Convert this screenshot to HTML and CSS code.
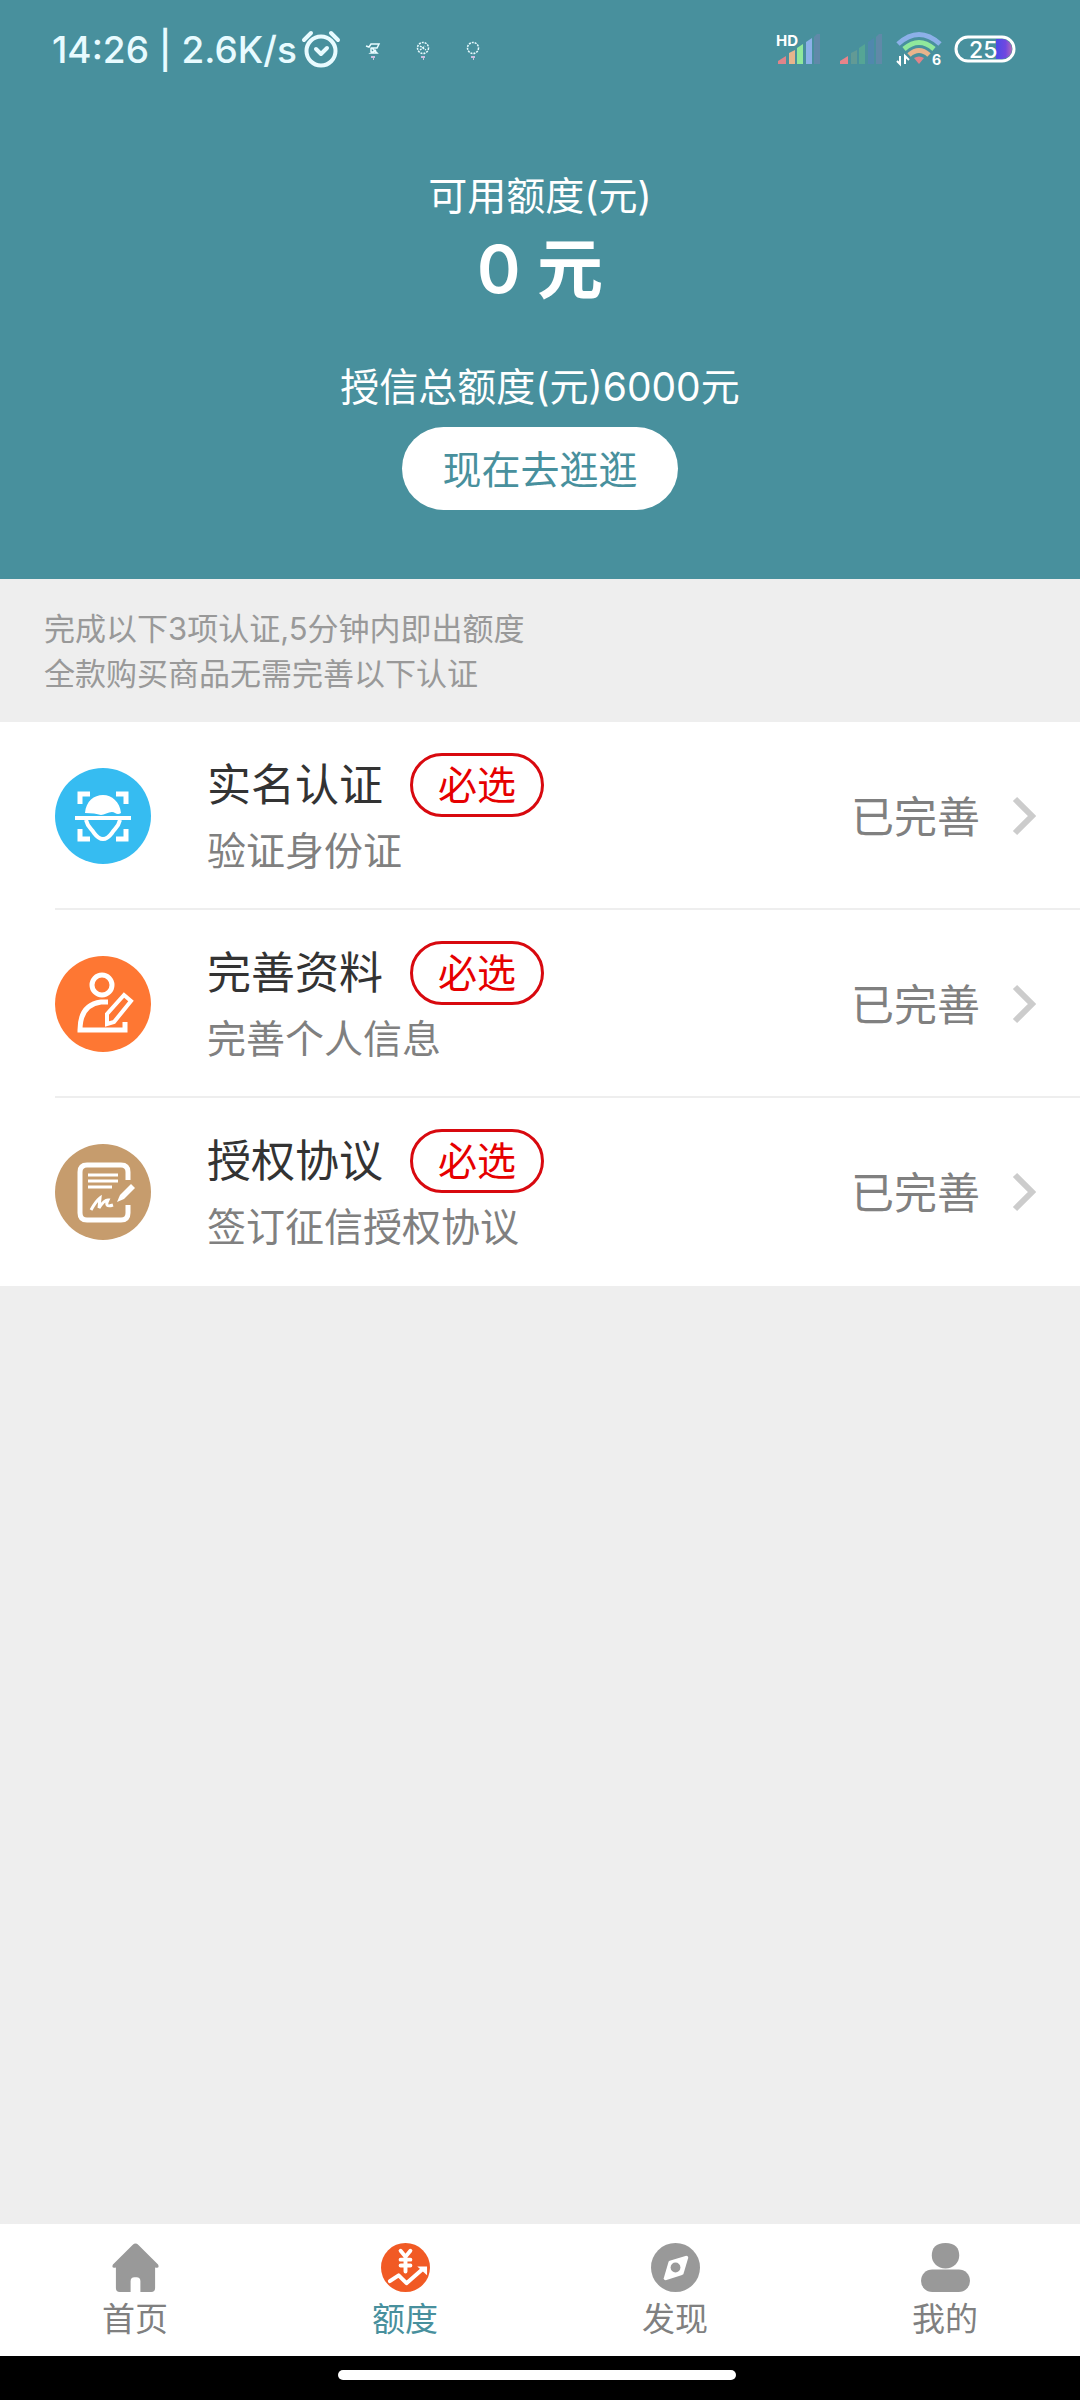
FILE: index.html
```html
<!DOCTYPE html>
<html lang="zh-CN">
<head>
<meta charset="utf-8">
<meta name="viewport" content="width=device-width, initial-scale=1">
<title>额度</title>
<link rel="stylesheet" href="styles.css">
</head>
<body>
<div class="app">
  <header class="hero">
    <div class="status">
      <div class="status-left">
        <span class="clock">14:26 | 2.6K/s</span>
        <svg class="alarm" viewBox="0 0 40 40" aria-hidden="true"><g fill="none" stroke="currentColor" stroke-width="4" stroke-linecap="round"><circle cx="20" cy="22" r="14.500"/><path d="M3 11l7-7M37 11l-7-7"/><path d="M15 20l5 5 6-6" stroke-linejoin="round"/></g></svg>
        <span class="notes">
          <svg viewBox="0 0 16 20" aria-hidden="true"><g fill="none" stroke="currentColor" stroke-width="1.500"><path d="M1 5l3 1 2-3h8l-2 4h-5l5 5H6l5-3M6 7v4"/></g><path d="M6 15h4v2H9v2H8v-2H6z" fill="#cdbfe0"/></svg>
          <svg viewBox="0 0 16 20" aria-hidden="true"><g fill="none" stroke="currentColor" stroke-width="1.500" stroke-dasharray="2 1"><circle cx="8" cy="7" r="5.500"/><path d="M5 5l6 4M5 9l5-4"/></g><path d="M6 15h4v2H9v2H8v-2H6z" fill="#cdbfe0"/></svg>
          <svg viewBox="0 0 16 20" aria-hidden="true"><g fill="none" stroke="currentColor" stroke-width="1.500" stroke-dasharray="2 1"><circle cx="8" cy="7" r="5.500"/></g><path d="M6 15h4v2H9v2H8v-2H6z" fill="#cdbfe0"/></svg>
        </span>
      </div>
      <div class="status-right">
        <svg class="signal" viewBox="0 0 46 34" aria-hidden="true"><path d="M2 32v-3l8-5v8z" fill="#e0848a"/><path d="M13 32V21l6-3v14z" fill="#e8b48c"/><path d="M21 32V16l6-4v20z" fill="#90e89c"/><path d="M30 32V10l6-4v26z" fill="#8cb0e8"/><path d="M38 32V5l3-3h3v30z" fill="#6089a8"/><text x="0" y="14" font-size="15" font-weight="700" fill="#fff">HD</text></svg>
        <svg class="signal" viewBox="0 0 46 34" aria-hidden="true"><path d="M2 32v-3l8-5v8z" fill="#e8848a"/><path d="M13 32V21l6-3v14z" fill="#629a95"/><path d="M21 32V16l6-4v20z" fill="#55a595"/><path d="M30 32V10l6-4v26z" fill="#5088ad"/><path d="M38 32V5l3-3h3v30z" fill="#6089a8"/></svg>
        <svg class="wifi" viewBox="0 0 46 36" aria-hidden="true"><g fill="none" stroke-width="5"><path d="M2 13Q23-6 44 13" stroke="#8cb0e8"/><path d="M8 18Q23 5 38 18" stroke="#90e89c"/><path d="M13 24Q23 15 33 24" stroke="#e8b48c"/></g><path d="M18 27q5-3 10 0l-5 6z" fill="#e0848a"/><path d="M4 25v8l-3-3M9 33v-8l4 4" fill="none" stroke="#fff" stroke-width="2"/><text x="36" y="34" font-size="14" font-weight="700" fill="#fff">6</text></svg>
        <svg class="battery" viewBox="0 0 62 28" aria-hidden="true"><defs><linearGradient id="charge"><stop offset="0" stop-color="#4b4be8"/><stop offset=".6" stop-color="#7048e0"/><stop offset="1" stop-color="#b468b8"/></linearGradient></defs><path d="M42 4h6a10 10 0 0 1 0 20h-6z" fill="url(#charge)"/><rect x="2" y="2" width="58" height="24" rx="12" fill="none" stroke="#fff" stroke-width="3"/><text x="15" y="23" font-size="23" font-weight="500" fill="#fff">25</text></svg>
      </div>
    </div>
    <section class="quota">
      <p class="label">可用额度(元)</p>
      <h1 class="amount">0 元</h1>
      <p class="label total">授信总额度(元)6000元</p>
      <button class="browse" type="button">现在去逛逛</button>
    </section>
  </header>
  <main class="content">
    <p class="notice">完成以下3项认证,5分钟内即出额度<br>全款购买商品无需完善以下认证</p>
    <ul class="steps">
      <li><a class="step" href="#identity">
        <svg class="step-icon" viewBox="0 0 96 96" aria-hidden="true"><circle cx="48" cy="48" r="48" fill="#36bcf1"/><g fill="none" stroke="#fff" stroke-width="5"><path d="M25 36V26h10M61 26h10v10M25 61v10h10M61 71h10V61"/><path d="M20 50h56" stroke-width="4"/><path d="M31 52c2 8 5 8 8 13 6 8 12 8 18 0 3-5 6-5 8-13" stroke-width="4"/></g><path d="M30 45c1-12 9-18 18-18s17 7 18 18q-3 2-6 0c-4-3-10 2-14 2q-6-2-16-2z" fill="#fff"/></svg>
        <span class="step-text"><span class="step-head"><span class="step-title">实名认证</span><span class="badge">必选</span></span><span class="step-sub">验证身份证</span></span>
        <span class="state">已完善</span>
        <svg class="chevron" viewBox="0 0 24 40" aria-hidden="true"><path d="M3 3l17 17L3 37" fill="none" stroke="currentColor" stroke-width="6"/></svg>
      </a></li>
      <li><a class="step" href="#profile">
        <svg class="step-icon" viewBox="0 0 96 96" aria-hidden="true"><circle cx="48" cy="48" r="48" fill="#fe7733"/><g fill="none" stroke="#fff" stroke-width="5"><circle cx="47" cy="29" r="10"/><path d="M53 46H46C31 48 25 58 25 74h45V66"/><path d="M52 68V58L69 39l7 6-17 21z" stroke-width="4"/></g></svg>
        <span class="step-text"><span class="step-head"><span class="step-title">完善资料</span><span class="badge">必选</span></span><span class="step-sub">完善个人信息</span></span>
        <span class="state">已完善</span>
        <svg class="chevron" viewBox="0 0 24 40" aria-hidden="true"><path d="M3 3l17 17L3 37" fill="none" stroke="currentColor" stroke-width="6"/></svg>
      </a></li>
      <li><a class="step" href="#agreement">
        <svg class="step-icon" viewBox="0 0 96 96" aria-hidden="true"><circle cx="48" cy="48" r="48" fill="#c69c6d"/><g fill="none" stroke="#fff" stroke-width="5"><path d="M73 36V28q0-7-7-7H32q-7 0-7 7v41q0 7 7 7h34q7 0 7-7v-8"/><path d="M33 31h30M33 37h30M33 43h24" stroke-width="3"/><path d="M36 66q5-9 9-12l-1 10q5-8 9-8-4 8 5 5" stroke-width="3"/></g><path d="M62 58l3-7 11-11 4 4-11 11z" fill="#fff"/></svg>
        <span class="step-text"><span class="step-head"><span class="step-title">授权协议</span><span class="badge">必选</span></span><span class="step-sub">签订征信授权协议</span></span>
        <span class="state">已完善</span>
        <svg class="chevron" viewBox="0 0 24 40" aria-hidden="true"><path d="M3 3l17 17L3 37" fill="none" stroke="currentColor" stroke-width="6"/></svg>
      </a></li>
    </ul>
  </main>
  <nav class="tabs">
    <a class="tab" href="#home"><svg viewBox="0 0 50 50" aria-hidden="true"><path d="M22 2q3-3 6 0l20 20q2 4-3 3v21q0 4-4 4H30V39q0-4-4-4h-2q-4 0-4 4v11H9q-4 0-4-4V25q-5 1-3-3z" fill="#999"/></svg>首页</a>
    <a class="tab active" href="#quota" aria-current="page"><svg viewBox="0 0 50 50" aria-hidden="true"><circle cx="25" cy="25" r="25" fill="#f15a24"/><g fill="none" stroke="#fff" stroke-width="4" stroke-linecap="round"><path d="M20 8l5 6 5-6M25 15v14M20 17h10M20 23h10"/><path d="M9 39l9-6 8 8 16-14" stroke-linejoin="round"/></g><path d="M37 24h10v9z" fill="#fff"/></svg>额度</a>
    <a class="tab" href="#discover"><svg viewBox="0 0 50 50" aria-hidden="true"><circle cx="25" cy="25" r="25" fill="#999"/><path d="M19 18l17-5q2 0 2 2l-5 17-2 1-16 5q-2 0-2-2l5-17z" fill="#fff"/><circle cx="25" cy="25" r="5" fill="#999"/></svg>发现</a>
    <a class="tab" href="#me"><svg viewBox="0 0 50 50" aria-hidden="true"><path d="M25 0c10 0 14 5 14 13 0 7-6 13-14 13s-14-6-14-13C11 5 15 0 25 0z" fill="#999"/><rect y="27" width="50" height="23" rx="11.500" fill="#999"/></svg>我的</a>
  </nav>
  <div class="gesture"><span class="gesture-bar"></span></div>
</div>
</body>
</html>
```
FILE: styles.css
```css
* { box-sizing: border-box; }

body {
  margin: 0;
  background: #eee;
  color: #333;
  font-family: Inter, "Noto Sans CJK SC", sans-serif;
}

p, h1, ul { margin: 0; padding: 0; }
li { list-style: none; }
a { color: inherit; text-decoration: none; }
svg { display: block; flex: none; }

.app {
  display: flex;
  flex-direction: column;
  min-height: 100vh;
}

.hero {
  background: #48909d;
  color: #fff;
  padding-bottom: 69px;
}

.status {
  display: flex;
  justify-content: space-between;
  align-items: center;
  height: 98px;
  padding: 0 64px 0 52px;
}

.status-left, .status-right, .notes { display: flex; align-items: center; }
.status-left { color: #e8fbff; }
.clock { font-size: 37px; font-weight: 500; white-space: nowrap; }
.alarm { width: 40px; height: 40px; margin-left: 4px; }
.notes { gap: 34px; margin-left: 24px; padding-top: 4px; }
.notes svg { width: 16px; height: 20px; }
.status-right { gap: 12px; }
.signal { width: 46px; height: 34px; }
.signal:first-child { margin-right: 4px; }
.wifi { width: 46px; height: 36px; }
.battery { width: 62px; height: 28px; }

.quota {
  display: flex;
  flex-direction: column;
  align-items: center;
  padding-top: 71px;
}

.label { font-size: 39px; line-height: 54px; }
.amount { font-size: 66px; line-height: 92px; font-weight: 600; }
.total { margin-top: 45px; }

.browse {
  height: 83px;
  margin-top: 13px;
  padding: 0 40px 4px;
  border: 0;
  border-radius: 42px;
  background: #fff;
  color: #48909d;
  font: inherit;
  font-size: 39px;
}

.content { flex: 1; }

.notice {
  padding: 27px 44px 26px;
  color: #999;
  font-size: 31px;
  line-height: 45px;
}

.steps { background: #fff; }
.steps li { padding-left: 55px; }

.step {
  display: flex;
  align-items: center;
  height: 188px;
  padding-top: 2px;
  padding-right: 44px;
  border-bottom: 2px solid #eee;
}

.steps li:last-child .step { border-bottom-color: #fff; }
.step-icon { width: 96px; height: 96px; }

.step-text {
  display: flex;
  flex: 1;
  flex-direction: column;
  gap: 6px;
  padding-left: 56px;
}

.step-head { display: flex; align-items: center; gap: 27px; }
.step-title { font-size: 44px; line-height: 64px; }

.badge {
  padding: 0 25px;
  border: 3px solid #d8090f;
  border-radius: 32px;
  color: #e60000;
  font-size: 39px;
  line-height: 58px;
}

.step-sub { color: #808080; font-size: 39px; line-height: 56px; }
.state { padding-bottom: 4px; color: #808080; font-size: 43px; }
.chevron { width: 24px; height: 40px; margin-left: 32px; color: #ccc; }

.tabs {
  display: grid;
  grid-template-columns: repeat(4, 1fr);
  height: 132px;
  background: #fff;
}

.tab {
  display: flex;
  flex-direction: column;
  align-items: center;
  padding-top: 19px;
  color: #808080;
  font-size: 33px;
  line-height: 48px;
  gap: 3px;
}

.tab svg { width: 49px; height: 49px; }
.active { color: #48909d; }

.gesture {
  display: flex;
  justify-content: center;
  height: 44px;
  padding: 14px 6px 0 0;
  background: #000;
}

.gesture-bar { width: 37%; height: 10px; border-radius: 5px; background: #fff; }
```
